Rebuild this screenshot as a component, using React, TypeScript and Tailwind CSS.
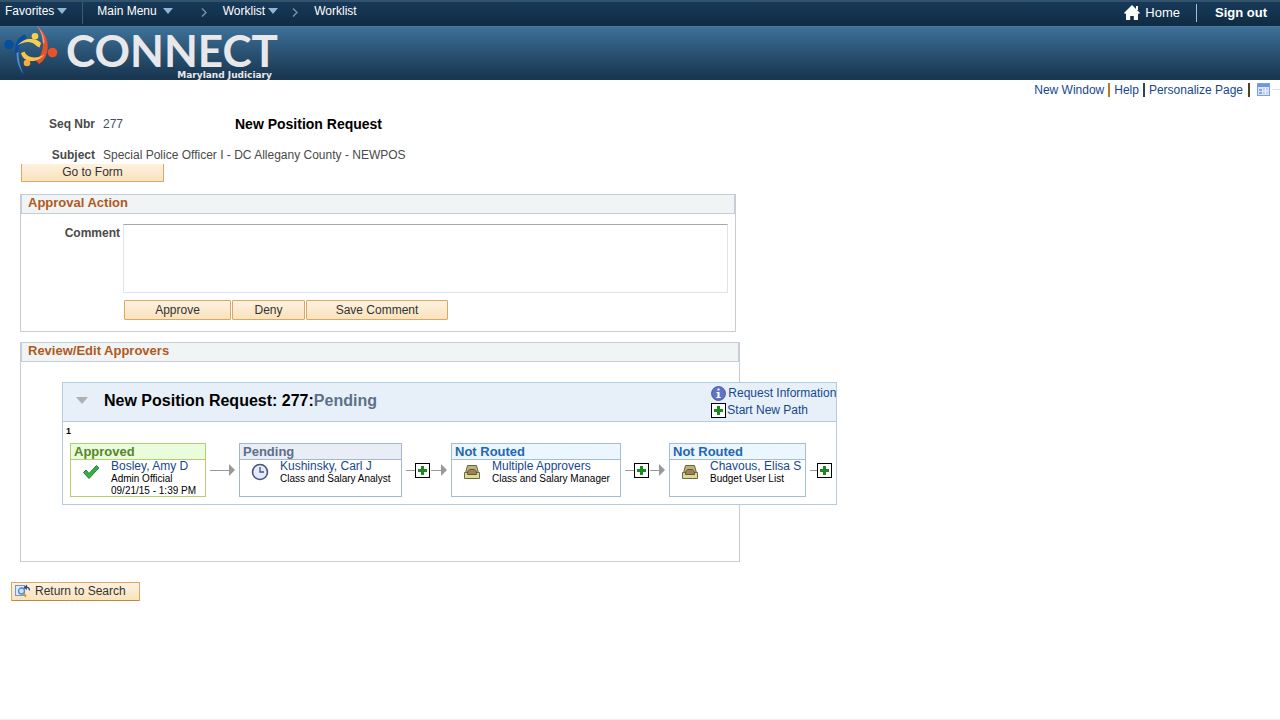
import React, { useState } from 'react';

type Status = 'approved' | 'pending' | 'notRouted';

interface Approver {
  status: Status;
  name: string;
  role: string;
  date?: string;
  width: string;
}

const approvers: Approver[] = [
  { status: 'approved', name: 'Bosley, Amy D', role: 'Admin Official', date: '09/21/15 - 1:39 PM', width: 'min-w-[136px]' },
  { status: 'pending', name: 'Kushinsky, Carl J', role: 'Class and Salary Analyst', width: 'min-w-[163px]' },
  { status: 'notRouted', name: 'Multiple Approvers', role: 'Class and Salary Manager', width: 'min-w-[170px]' },
  { status: 'notRouted', name: 'Chavous, Elisa S', role: 'Budget User List', width: 'min-w-[137px]' },
];

const statusStyles: Record<Status, { label: string; card: string; head: string }> = {
  approved: {
    label: 'Approved',
    card: 'border-[#b3cf72]',
    head: 'border-[#b3cf72] bg-[#e9fddc] text-[#56862a]',
  },
  pending: {
    label: 'Pending',
    card: 'border-[#a3b7d0]',
    head: 'border-[#a3b7d0] bg-[#e9edf5] text-[#5d7089]',
  },
  notRouted: {
    label: 'Not Routed',
    card: 'border-[#a3bcda]',
    head: 'border-[#a3bcda] bg-[#ebf6ff] text-[#1f68ae]',
  },
};

const Logo = () => (
  <svg className="h-[54px] w-[60px] shrink-0 overflow-visible" viewBox="0 0 60 54" aria-hidden="true">
    <circle cx="9" cy="17.500" r="4.800" fill="#064f9e" />
    <path d="M25 7.500L27 11C21 14 18.500 19 18.500 26C18.500 35 21 42 24 48C18 41 14.500 32 15 23C15.300 15 18 10 25 7.500Z" fill="#064f9e" />
    <path d="M18.500 25C18.500 35 21 42 24 48C19 41 16.500 34 16.500 26Z" fill="#5c8dba" />
    <path d="M37 -1C44 4 48 12 47.700 20C47.500 28 44 34 39 37L36 33.500C41 29 43 24 43 17C43 10 41 4 37 -1Z" fill="#e6532a" />
    <path d="M37 -1C41 4 43 10 43 17L44.500 15C44 8 41 3 37 -1Z" fill="#f0a184" />
    <circle cx="52.500" cy="25.500" r="4.800" fill="#e6532a" />
    <circle cx="35" cy="9.300" r="3.300" fill="#f9cf52" />
    <path d="M17.500 18.500C22 13 27 11.500 32 12C36 12.500 39 13.500 41 16L39.500 20.500L36.500 19C32 13.500 24 14 17.500 18.500Z" fill="#f9cf52" />
    <path d="M21 26L24.500 24.500C26.500 30 35 33 44.500 27.500C40 33 35 34.500 30 34C26 33.500 22 31 21 26Z" fill="#f9c24c" />
    <circle cx="27" cy="36" r="3.300" fill="#f3a945" />
  </svg>
);

const Caret = () => (
  <svg className="h-[6px] w-[10px]" viewBox="0 0 10 6" aria-hidden="true">
    <path d="M0 0H10L5 6Z" fill="#8fb6d4" />
  </svg>
);

const Chevron = () => (
  <svg className="h-[9px] w-[6px]" viewBox="0 0 6 9" aria-hidden="true">
    <path d="M1 0.500L5 4.500L1 8.500" fill="none" stroke="#7794ad" strokeWidth="1.400" />
  </svg>
);

const HomeIcon = () => (
  <svg className="h-[15px] w-[16px]" viewBox="0 0 16 15" aria-hidden="true">
    <path d="M8 0L16 8L14.800 9L14 8.300V15H9.800V11H6.200V15H2V8.300L1.200 9L0 8Z" fill="#fff" />
    <rect x="12" y="1" width="2" height="4" fill="#fff" />
  </svg>
);

const GridIcon = () => (
  <svg className="h-[13px] w-[13px]" viewBox="0 0 13 13" aria-hidden="true">
    <rect x="0.500" y="0.500" width="12" height="12" fill="#d9e6fb" stroke="#7d9fe0" />
    <rect x="1" y="1" width="11" height="3" fill="#6f96e2" />
    <rect x="2" y="6" width="3" height="2" fill="#86a8e6" />
    <rect x="2" y="9" width="3" height="2" fill="#86a8e6" />
    <rect x="6" y="5" width="5" height="6" fill="#b9cff5" />
    <path d="M6 8H11M8.500 5V11" stroke="#eef4ff" />
  </svg>
);

const PlusIcon = () => (
  <svg className="block h-[15px] w-[15px]" viewBox="0 0 15 15" aria-hidden="true">
    <rect x="0.500" y="0.500" width="14" height="14" fill="#fff" stroke="#000" />
    <path d="M6 3H9V6H12V9H9V12H6V9H3V6H6Z" fill="#1b8a1f" />
  </svg>
);

const InfoIcon = () => (
  <svg className="h-[15px] w-[15px]" viewBox="0 0 15 15" aria-hidden="true">
    <circle cx="7.500" cy="7.500" r="6.900" fill="#6275c2" stroke="#44549c" />
    <rect x="6.500" y="2.500" width="2" height="2" fill="#fff" />
    <path d="M5.500 6H8.500V11H9.700V12H5.400V11H6.500V7H5.500Z" fill="#fff" />
  </svg>
);

const CheckIcon = () => (
  <svg className="h-[16px] w-[18px]" viewBox="0 0 18 16" aria-hidden="true">
    <path d="M1.500 8.500L4 6L7 9.500L14.500 1.500L16.800 4L7 14.500Z" fill="#36b14a" stroke="#1f8231" strokeWidth="1" />
  </svg>
);

const ClockIcon = () => (
  <svg className="h-[18px] w-[18px]" viewBox="0 0 18 18" aria-hidden="true">
    <circle cx="9" cy="9" r="7.500" fill="#e6e9fb" stroke="#4a5280" strokeWidth="1.600" />
    <path d="M9 4V9H13" fill="none" stroke="#4a5280" strokeWidth="1.300" />
  </svg>
);

const TrayIcon = () => (
  <svg className="h-[14px] w-[16px]" viewBox="0 0 16 14" aria-hidden="true">
    <path d="M3.500 0.500H12.500L14.500 8H1.500Z" fill="#b3b57a" stroke="#6f6238" />
    <path d="M0.500 7.500H15.500V13.500H0.500Z" fill="#d8dc94" stroke="#6f6a3c" />
    <path d="M5.500 4.500H10.500L12.500 7V9.500H3.500V7Z" fill="#a08058" stroke="#6f5638" />
  </svg>
);

const ReturnIcon = () => (
  <svg className="h-[14px] w-[16px]" viewBox="0 0 16 14" aria-hidden="true">
    <rect x="0.500" y="1.500" width="9" height="10" fill="#dce8fb" stroke="#6f97d8" />
    <circle cx="6.500" cy="7" r="3" fill="#c9e0fa" stroke="#5f86bd" strokeWidth="1.300" />
    <path d="M8.500 9.500L11 12.500" stroke="#b9a52b" strokeWidth="2" />
    <path d="M10 3.500C13 2.500 14.500 4 14.500 6.500" fill="none" stroke="#364a7d" strokeWidth="1.300" />
    <path d="M8.500 3.500L12 0.500V6Z" fill="#364a7d" />
  </svg>
);

const statusIcons: Record<Status, React.ReactNode> = {
  approved: <CheckIcon />,
  pending: <ClockIcon />,
  notRouted: <TrayIcon />,
};

interface ActionButtonProps {
  children: React.ReactNode;
  className?: string;
}

const ActionButton: React.FC<ActionButtonProps> = ({ children, className = '' }) => (
  <button
    type="button"
    className={`flex items-center border border-[#d9a766] bg-linear-to-b from-[#fdf1df] to-[#fae3bd] text-[#333] ${className}`}
  >
    {children}
  </button>
);

interface GroupBoxProps {
  title: string;
  className?: string;
  children: React.ReactNode;
}

const GroupBox: React.FC<GroupBoxProps> = ({ title, className = '', children }) => (
  <section className={`w-full border border-[#c8ccd4] ${className}`}>
    <h2 className="border-x border-b border-[#c8ccd4] bg-[#f0f4f5] px-1.5 pb-[3px] text-[13px] leading-[15px] font-bold text-[#b1591b]">
      {title}
    </h2>
    {children}
  </section>
);

const ApproverCard: React.FC<{ approver: Approver }> = ({ approver }) => {
  const style = statusStyles[approver.status];
  return (
    <div className={`h-[54px] border bg-white ${approver.width} ${style.card}`}>
      <div className={`border-b px-[3px] text-[13px] leading-[15px] font-bold ${style.head}`}>{style.label}</div>
      <div className="flex pr-1">
        <div className="flex h-6 w-10 items-center justify-center">{statusIcons[approver.status]}</div>
        <div className="text-[10px] leading-[12px] whitespace-nowrap text-black">
          <a href="#approver" className="block text-xs leading-[13px] text-[#16478e]">{approver.name}</a>
          <div>{approver.role}</div>
          {approver.date && <div>{approver.date}</div>}
        </div>
      </div>
    </div>
  );
};

const Arrow = ({ line }: { line: string }) => (
  <div className="flex items-center">
    <div className={`h-px bg-[#999] ${line}`} />
    <svg className="h-3 w-[6px]" viewBox="0 0 6 12" aria-hidden="true">
      <path d="M0 0L6 6L0 12Z" fill="#999" />
    </svg>
  </div>
);

const InsertStep = ({ line }: { line: string }) => (
  <div className="flex items-center">
    <div className={`h-px bg-[#999] ${line}`} />
    <button type="button" aria-label="Insert approver">
      <PlusIcon />
    </button>
  </div>
);

const TopNav = () => (
  <nav className="flex h-[26px] border-t-2 border-[#33526c] bg-linear-to-b from-[#173a59] to-[#102b43] text-xs text-white">
    <a href="#favorites" className="flex h-[22px] items-center gap-[3px] border-r border-[#3d5a73] pr-[15px] pb-1 pl-[5px]">
      Favorites <Caret />
    </a>
    <a href="#menu" className="flex h-[22px] items-center gap-1.5 pb-1 pl-[14px]">
      Main Menu <Caret />
    </a>
    <div className="flex h-[22px] items-center pb-0.5 pl-7">
      <Chevron />
    </div>
    <a href="#worklist" className="flex h-[22px] items-center gap-[3px] pb-1 pl-4">
      Worklist <Caret />
    </a>
    <div className="flex h-[22px] items-center pb-0.5 pl-[14px]">
      <Chevron />
    </div>
    <a href="#worklist-page" className="flex h-[22px] items-center pb-1 pl-4">Worklist</a>
    <div className="ml-auto flex h-[21px] items-center text-[13px]">
      <a href="#home" className="flex items-center gap-[5px] pr-4">
        <HomeIcon /> Home
      </a>
      <a href="#signout" className="border-l border-[#a3bccf] pr-[13px] pl-[18px] leading-[18px] font-bold">Sign out</a>
    </div>
  </nav>
);

const Banner = () => (
  <header className="flex h-[54px] border-t border-b border-t-[#4e7c9f] border-b-[#1a3850] bg-linear-to-b from-[#3d7199] to-[#18354f]">
    <Logo />
    <div className="flex flex-col items-end pl-1.5 text-[#e8e8ea]">
      <div className="pt-1 font-[Lato,sans-serif] text-[44px] leading-[39px] font-bold">CONNECT</div>
      <div className="pr-1.5 font-['DejaVu_Sans',sans-serif] text-[9px] leading-[10px] font-bold">Maryland Judiciary</div>
    </div>
  </header>
);

const PageLinks = () => (
  <div className="flex h-[19px] items-center justify-end text-[#16478e]">
    <a href="#new-window">New Window</a>
    <span className="mx-1 h-[14px] w-0.5 bg-[#b07d2c]" />
    <a href="#help">Help</a>
    <span className="mx-1 h-[14px] w-0.5 bg-[#2c4a45]" />
    <a href="#personalize">Personalize Page</a>
    <span className="mx-[5px] h-[14px] w-0.5 bg-[#54401f]" />
    <a href="#grid" aria-label="Page layout" className="ml-0.5">
      <GridIcon />
    </a>
    <span className="ml-0.5 h-px w-2 bg-[#dde0e4]" />
  </div>
);

export default function App() {
  const [comment, setComment] = useState('');

  return (
    <div className="min-h-screen border-b border-[#eee] bg-white font-['Liberation_Sans',Arial,sans-serif] text-xs text-[#4a4a4a]">
      <TopNav />
      <Banner />
      <PageLinks />

      <main className="pl-5">
        <div className="flex items-center pt-[17px] leading-4">
          <span className="w-[75px] text-right font-bold">Seq Nbr</span>
          <span className="w-[140px] pl-2 text-[#3f4f66]">277</span>
          <h1 className="text-sm leading-4 font-bold text-black">New Position Request</h1>
        </div>
        <div className="flex items-center pt-[15px] leading-4">
          <span className="w-[75px] text-right font-bold">Subject</span>
          <span className="pl-2">Special Police Officer I - DC Allegany County - NEWPOS</span>
        </div>

        {/* Top edge sits flush under the subject line */}
        <ActionButton className="mt-px ml-px h-[18px] w-[143px] justify-center rounded-b-[1px] border-t-0 pb-0.5">
          Go to Form
        </ActionButton>

        <GroupBox title="Approval Action" className="mt-3 max-w-[716px]">
          <div className="flex pt-2.5 pr-[7px]">
            <label htmlFor="comment" className="w-[102px] pt-px pr-[3px] text-right leading-4 font-bold">
              Comment
            </label>
            <textarea
              id="comment"
              value={comment}
              onChange={(e) => setComment(e.target.value)}
              className="h-[69px] flex-1 resize-none border border-[#dfe3ec] border-t-[#a6a6ae] p-1 outline-none"
            />
          </div>
          <div className="flex gap-px pt-[7px] pb-[11px] pl-[103px]">
            <ActionButton className="h-5 w-[107px] justify-center rounded-[1px]">Approve</ActionButton>
            <ActionButton className="h-5 w-[73px] justify-center rounded-[1px]">Deny</ActionButton>
            <ActionButton className="h-5 w-[142px] justify-center rounded-[1px]">Save Comment</ActionButton>
          </div>
        </GroupBox>

        <GroupBox title="Review/Edit Approvers" className="mt-2.5 max-w-[720px]">
          <div className="pt-5 pb-14 pl-[41px]">
            {/* The approval chain is wider than its group box */}
            <div className="w-max border border-[#b5cbe0] bg-white">
              <div className="flex items-center border-b border-[#b5cbe0] bg-[#e7f0f8] py-0.5">
                <button type="button" aria-label="Collapse" className="pb-1 pl-[13px]">
                  <svg className="h-[7px] w-[12px]" viewBox="0 0 12 7" aria-hidden="true">
                    <path d="M0 0H12L6 7Z" fill="#b0b0b0" />
                  </svg>
                </button>
                <h3 className="pb-0.5 pl-4 text-base leading-5 font-bold text-black">
                  New Position Request: 277:<span className="text-[#5d7089]">Pending</span>
                </h3>
                <div className="ml-auto leading-[17px] text-[#16478e]">
                  <a href="#info" className="flex items-center gap-0.5">
                    <InfoIcon /> Request Information
                  </a>
                  <a href="#path" className="flex items-center gap-px">
                    <PlusIcon /> Start New Path
                  </a>
                </div>
              </div>
              <div className="pt-1 pl-[3px] text-[9px] leading-[10px] font-bold text-black">1</div>
              <div className="flex items-center gap-1 pt-[7px] pr-1 pb-[7px] pl-[7px]">
                <ApproverCard approver={approvers[0]} />
                <Arrow line="w-[19px]" />
                <ApproverCard approver={approvers[1]} />
                <div className="flex items-center gap-px">
                  <InsertStep line="w-[9px]" />
                  <Arrow line="w-[10px]" />
                </div>
                <ApproverCard approver={approvers[2]} />
                <div className="flex items-center gap-px">
                  <InsertStep line="w-[9px]" />
                  <Arrow line="w-[9px]" />
                </div>
                <ApproverCard approver={approvers[3]} />
                <InsertStep line="w-[7px]" />
              </div>
            </div>
          </div>
        </GroupBox>
      </main>

      <ActionButton className="mt-5 ml-[11px] h-[19px] w-[129px] gap-1 rounded-[1px] border-b-[#c08a3e] pb-px pl-[3px]">
        <ReturnIcon /> Return to Search
      </ActionButton>
    </div>
  );
}
